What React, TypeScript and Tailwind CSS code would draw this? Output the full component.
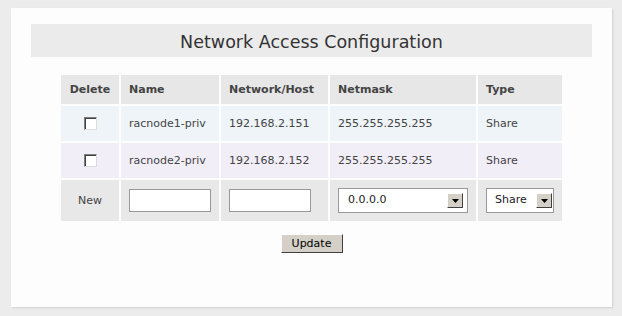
import React from "react";

const rows = [
  { name: "racnode1-priv", host: "192.168.2.151", mask: "255.255.255.255", type: "Share", bg: "bg-[#eef4f8]" },
  { name: "racnode2-priv", host: "192.168.2.152", mask: "255.255.255.255", type: "Share", bg: "bg-[#f2eef8]" },
];

function Checkbox() {
  return (
    <span className="block w-[13px] h-[13px] bg-white border border-t-[#808080] border-l-[#808080] border-r-[#dcdcdc] border-b-[#dcdcdc] shadow-[inset_1px_1px_0_#404040]" />
  );
}

function Arrow() {
  return (
    <span className="flex items-center justify-center w-[16px] h-[15px] bg-[#d4d0c8] border border-t-white border-l-white border-r-[#404040] border-b-[#404040]">
      <svg width="7" height="4" viewBox="0 0 7 4">
        <path d="M0 0h7L3.5 4z" fill="#000" />
      </svg>
    </span>
  );
}

export default function App() {
  const head = "bg-[#e7e7e7] flex items-center pt-[2px] font-bold text-[#444]";
  const cell = "flex items-center pt-[2px] pl-[8px] text-[#444]";
  return (
    <div className="w-[622px] h-[316px] bg-[#ececec] pt-[8px] pl-[11px] font-['DejaVu_Sans',Verdana,sans-serif] text-[11px]">
      <div className="w-[601px] h-[299px] bg-[#fcfdfc] shadow-[1px_1px_2px_#cfcfcf] pt-[16px] flex flex-col items-center">
        <div className="w-[561px] h-[33px] bg-[#ebebeb] flex items-center justify-center pt-[3px] text-[17.5px] text-[#333]">
          Network Access Configuration
        </div>

        <div className="mt-[18px] grid grid-cols-[58px_98px_107px_146px_84px] grid-rows-[29px_35px_35px_41px] gap-[2px]">
          <div className={`${head} justify-center`}>Delete</div>
          <div className={`${head} pl-[8px]`}>Name</div>
          <div className={`${head} pl-[8px]`}>Network/Host</div>
          <div className={`${head} pl-[8px]`}>Netmask</div>
          <div className={`${head} pl-[8px]`}>Type</div>

          {rows.map((r) => (
            <React.Fragment key={r.name}>
              <div className={`${r.bg} flex items-center justify-center`}>
                <Checkbox />
              </div>
              <div className={`${r.bg} ${cell}`}>{r.name}</div>
              <div className={`${r.bg} ${cell}`}>{r.host}</div>
              <div className={`${r.bg} ${cell}`}>{r.mask}</div>
              <div className={`${r.bg} ${cell}`}>{r.type}</div>
            </React.Fragment>
          ))}

          <div className="bg-[#e8e8e8] flex items-center justify-center pt-[2px] text-[#444]">New</div>
          <div className="bg-[#e8e8e8] flex items-center pl-[8px]">
            <div className="w-[82px] h-[23px] bg-white border border-[#999]" />
          </div>
          <div className="bg-[#e8e8e8] flex items-center pl-[8px]">
            <div className="w-[82px] h-[23px] bg-white border border-[#999]" />
          </div>
          <div className="bg-[#e8e8e8] flex items-center pl-[8px]">
            <div className="w-[130px] h-[25px] bg-white border border-[#999] flex items-center justify-between pl-[9px] pr-[4px] text-[#222]">
              <span>0.0.0.0</span>
              <Arrow />
            </div>
          </div>
          <div className="bg-[#e8e8e8] flex items-center pl-[8px]">
            <div className="w-[68px] h-[25px] bg-white border border-[#999] flex items-center justify-between pl-[8px] pr-[1px] text-[#222]">
              <span>Share</span>
              <Arrow />
            </div>
          </div>
        </div>

        <button className="mt-[13px] w-[62px] h-[19px] bg-[#d4d0c8] border border-t-white border-l-white border-r-[#404040] border-b-[#404040] text-[11px] text-black leading-none">
          Update
        </button>
      </div>
    </div>
  );
}
